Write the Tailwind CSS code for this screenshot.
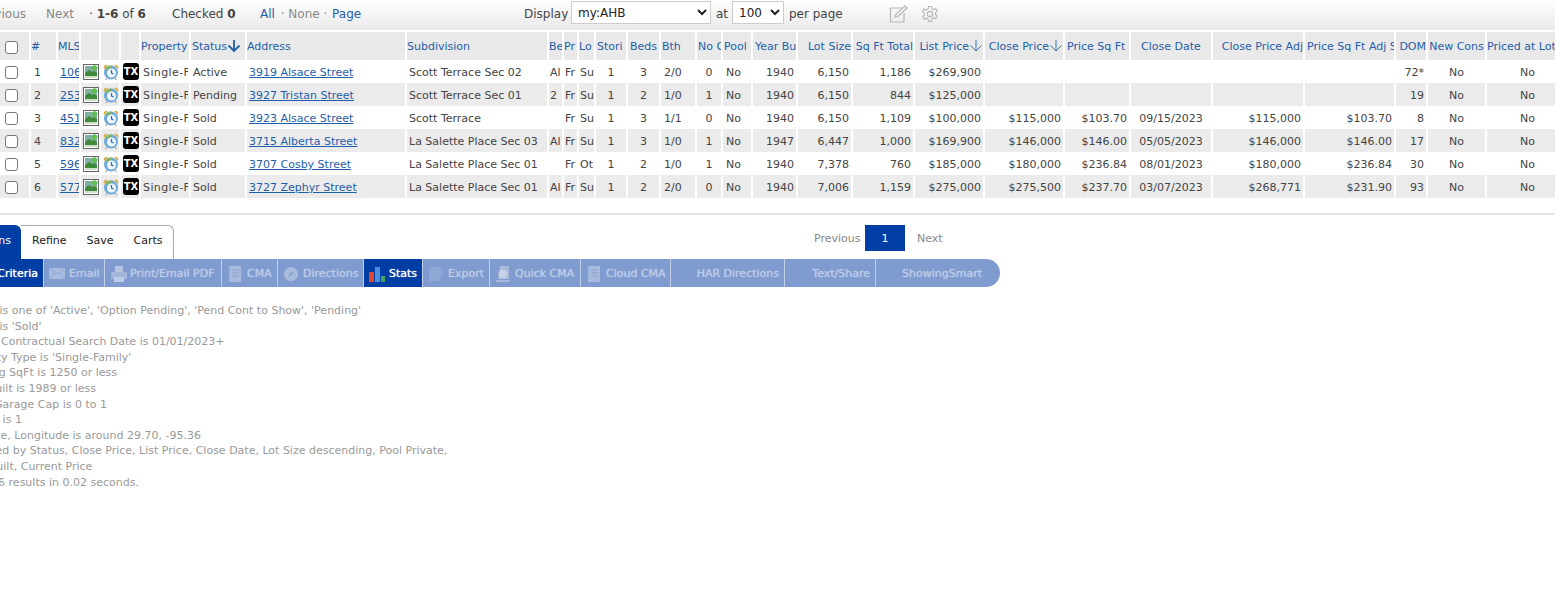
<!DOCTYPE html>
<html lang="en">
<head>
    <meta charset="UTF-8">
    <meta name="viewport" content="width=device-width, initial-scale=1.0">
    <title>Search Results</title>
    <script src="https://cdn.jsdelivr.net/npm/@tailwindcss/browser@4"></script>
</head>
<body class="bg-white overflow-hidden font-['DejaVu_Sans',Verdana,sans-serif] text-[11px] text-[#444]">
    <!-- toolbar, page is scrolled sideways so the left edge is cut -->
    <div class="h-[30px] bg-gradient-to-b from-white to-[#e9e9e9] flex items-center whitespace-nowrap text-[12px] pb-[2px]">
        <div class="flex items-center w-[520px] shrink-0 -ml-[36px]">
            <span class="text-[#888] w-[82px] text-right pr-[20px]">Previous</span>
            <span class="text-[#888] w-[43px]">Next</span>
            <span class="w-[83px]">· <b>1-6</b> of <b>6</b></span>
            <span class="w-[88px]">Checked <b>0</b></span>
            <a class="text-[#1f5ea8]">All</a><span class="text-[#888] ml-[2px] mr-[1px]">&nbsp;· None ·&nbsp;</span><a class="text-[#1f5ea8]">Page</a>
        </div>
        <div class="flex items-center ml-[40px]">
            <span class="w-[42px] mr-[5px]">Display</span>
            <select class="w-[140px] h-[23px] -mt-[3px] bg-white border border-[#ccc] pl-[2px] text-[12px] text-[#222]"><option>my:AHB</option></select>
            <span class="w-[11px] mx-[5px]">at</span>
            <select class="w-[52px] h-[23px] -mt-[3px] bg-white border border-[#ccc] pl-[2px] text-[12px] text-[#222]"><option>100</option></select>
            <span class="w-[54px] ml-[5px]">per page</span>
            <svg class="ml-[45px]" width="20" height="20" viewBox="0 0 20 20" fill="none" stroke="#b5b5b5" stroke-width="1.2"><path d="M14 4H2.500v14H16V9"/><path d="M7 13l1-3L17 2l2 2-8.500 8z"/></svg>
            <svg class="ml-[13px]" width="18" height="18" viewBox="0 0 24 24" fill="none" stroke="#b5b5b5" stroke-width="1.500"><circle cx="12" cy="12" r="3.500"/><path d="M10 2h4l.6 3 2.400 1.200 2.600-1.500 2 3.400-2.300 2 .1 2.800 2.200 2-2 3.400-2.700-1.400-2.300 1.300L14 22h-4l-.6-3.100-2.400-1.300-2.700 1.400-2-3.400 2.300-2v-2.800L2 8.800l2-3.400 2.700 1.400L9.400 5z"/></svg>
        </div>
    </div>

    <table class="table-fixed w-[1570px] border-separate border-spacing-0 mt-0">
        <colgroup id="cols"></colgroup>
        <thead><tr id="head" class="h-[30px]"></tr></thead>
        <tbody id="rows"></tbody>
    </table>

    <hr class="mt-[15px] border-t-2 border-[#e6e6e6]">

    <div class="relative h-[35px] mt-[9px]">
        <div class="absolute left-0 bottom-0 flex items-stretch h-[34px]">
            <span class="bg-[#003da5] text-white rounded-tr-[6px] w-[21px] flex items-center justify-end pr-[10px] pb-[2px] text-[11px]">ns</span>
            <div class="flex items-center gap-[20px] pl-[11px] pr-[10px] pb-[2px] border border-b-0 border-l-0 border-[#aaa] rounded-tr-[6px] text-[#222]">
                <span>Refine</span><span>Save</span><span>Carts</span>
            </div>
        </div>
        <div class="absolute left-[814px] top-[1px] flex items-center h-[26px] text-[#888]">
            <span class="w-[51px] pt-[2px]">Previous</span>
            <span class="w-[40px] h-[26px] pt-[2px] bg-[#003da5] text-white flex items-center justify-center">1</span>
            <span class="ml-[12px] pt-[2px]">Next</span>
        </div>
    </div>

    <!-- action bar -->
    <div class="flex w-[1000px] h-[28px] bg-[#809bcf] rounded-r-[14px] text-[#bccbe8] whitespace-nowrap [text-shadow:0_0_1px_currentColor]" id="bar"></div>

    <div class="mt-[16px] -ml-[39px] text-[#999] leading-[15.6px] whitespace-nowrap">
        <div>Status is one of 'Active', 'Option Pending', 'Pend Cont to Show', 'Pending'</div>
        <div>Status is 'Sold'</div>
        <div class="ml-[15px]">And Contractual Search Date is 01/01/2023+</div>
        <div>Property Type is 'Single-Family'</div>
        <div>Building SqFt is 1250 or less</div>
        <div>Year Built is 1989 or less</div>
        <div class="ml-[8px]">And Garage Cap is 0 to 1</div>
        <div>Stories is 1</div>
        <div class="ml-[1px]">Latitude, Longitude is around 29.70, -95.36</div>
        <div class="ml-[12px]">Sorted by Status, Close Price, List Price, Close Date, Lot Size descending, Pool Private,</div>
        <div class="ml-[1px]">Year Built, Current Price</div>
        <div>Found 6 results in 0.02 seconds.</div>
    </div>

    <script>
        const arrow = '<svg class="inline-block align-[-2px]" width="14" height="13" viewBox="0 0 14 13" fill="none" stroke="#1f5ea8" stroke-width="1.800"><path d="M7 1v11M1.500 6.500L7 12l5.500-5.500"/></svg>';
        const thinArrow = '<svg class="inline-block align-[-2px]" width="14" height="13" viewBox="0 0 14 13" fill="none" stroke="#3b74b4" stroke-width="1"><path d="M7 1v11M1.500 6.500L7 12l5.500-5.500"/></svg>';

        // width, label, header align
        const columns = [
            [31, '<input type="checkbox" class="w-[13px] h-[13px] ml-[5px] appearance-none border border-[#777] rounded-[3px] bg-white block">', 'l'],
            [27, '#', 'l'], [23, 'MLS', 'l'], [20, '', 'l'], [20, '', 'l'], [20, '', 'l'],
            [50, 'Property', 'l'], [56, '<span class="ml-[1px]">Status</span>' + arrow, 'l'], [160, 'Address', 'l'], [142, 'Subdivision', 'l'],
            [15, 'Be', 'l'], [15, 'Pr', 'l'], [17, 'Lo', 'l'], [32, '<span class="ml-[1px]">Stori</span>', 'l'], [33, 'Beds', 'c'], [36, '<span class="ml-[1px]">Bth</span>', 'l'],
            [26, '<span class="ml-[1px]">No G</span>', 'l'], [30, '<span class="ml-[1px]">Pool</span>', 'l'], [45, '<span class="ml-[2px]">Year Bu</span>', 'l'], [55, 'Lot Size', 'r'], [62, 'Sq Ft Total', 'r'],
            [70, 'List Price' + thinArrow, 'r'], [80, 'Close Price' + thinArrow, 'r'], [66, '<span class="ml-[2px]">Price Sq Ft</span>', 'l'],
            [82, 'Close Date', 'c'], [92, 'Close Price Adj', 'r'], [91, '<span class="ml-[2px]">Price Sq Ft Adj Sq</span>', 'l'], [32, 'DOM', 'r'],
            [59, 'New Cons', 'c'], [83, 'Priced at Lot', 'l']
        ];

        const rows = [
            ['1', '106', 'Active', '3919 Alsace Street', 'Scott Terrace Sec 02', 'Al', 'Fr', 'Su', '1', '3', '2/0', '0', 'No', '1940', '6,150', '1,186', '$269,900', '', '', '', '', '', '72*'],
            ['2', '253', 'Pending', '3927 Tristan Street', 'Scott Terrace Sec 01', '2', 'Fr', 'Su', '1', '2', '1/0', '1', 'No', '1940', '6,150', '844', '$125,000', '', '', '', '', '', '19'],
            ['3', '451', 'Sold', '3923 Alsace Street', 'Scott Terrace', '', 'Fr', 'Su', '1', '3', '1/1', '0', 'No', '1940', '6,150', '1,109', '$100,000', '$115,000', '$103.70', '09/15/2023', '$115,000', '$103.70', '8'],
            ['4', '832', 'Sold', '3715 Alberta Street', 'La Salette Place Sec 03', 'Al', 'Fr', 'Su', '1', '3', '1/0', '1', 'No', '1947', '6,447', '1,000', '$169,900', '$146,000', '$146.00', '05/05/2023', '$146,000', '$146.00', '17'],
            ['5', '596', 'Sold', '3707 Cosby Street', 'La Salette Place Sec 01', '', 'Fr', 'Ot', '1', '2', '1/0', '1', 'No', '1940', '7,378', '760', '$185,000', '$180,000', '$236.84', '08/01/2023', '$180,000', '$236.84', '30'],
            ['6', '577', 'Sold', '3727 Zephyr Street', 'La Salette Place Sec 01', 'Al', 'Fr', 'Su', '1', '2', '2/0', '0', 'No', '1940', '7,006', '1,159', '$275,000', '$275,500', '$237.70', '03/07/2023', '$268,771', '$231.90', '93']
        ];

        const photoIcon = '<svg width="16" height="16" viewBox="0 0 16 16" class="ml-[2px]"><rect x=".5" y=".5" width="15" height="15" fill="#fff" stroke="#666"/><rect x="2" y="2" width="12" height="7" fill="#7fb0a0"/><path d="M2 9l4-3 3 2 2-1 3 2v3H2z" fill="#3f8a3a"/><rect x="2" y="12" width="12" height="2" fill="#cfe0c8"/><path d="M11.500 1v6M8.500 4h6" stroke="#5ec04a" stroke-width="1.800"/></svg>';
        const clockIcon = '<svg width="18" height="18" viewBox="0 0 18 18" class="ml-[1px]"><path d="M2 6a3 3 0 0 1 4-4zM16 6a3 3 0 0 0-4-4z" fill="#d9a93f"/><circle cx="9" cy="9.500" r="7" fill="#6fa9d8"/><path d="M3 6a7 7 0 0 1 8-3.200L7 7z" fill="#7fb56a"/><circle cx="9.500" cy="10" r="4.500" fill="#eef6fc"/><path d="M9.500 7v3l2 1" fill="none" stroke="#2a6ea8" stroke-width="1.300"/><path d="M3.500 17l1.500-1.500M14.500 17L13 15.500" stroke="#aaa" stroke-width="1.200"/></svg>';
        const txIcon = '<span class="w-[16px] h-[17px] ml-[2px] bg-black rounded-[3px] text-white font-bold text-[10px] flex items-center justify-center">TX</span>';

        const align = { l: 'text-left', c: 'text-center', r: 'text-right' };

        document.getElementById('cols').innerHTML = columns.map(c => '<col style="width:' + c[0] + 'px">').join('');
        document.getElementById('head').innerHTML = columns.map(c =>
            '<th class="bg-[#e9e9e9] border-r-2 border-t-2 border-white font-normal text-[#1f5ea8] overflow-hidden whitespace-nowrap pt-[2px] ' + align[c[2]] + '">' + c[1] + '</th>'
        ).join('');

        const td = 'border-r-2 border-r-white overflow-hidden whitespace-nowrap ';
        const link = 'text-[#1f5ea8] underline';
        document.getElementById('rows').innerHTML = rows.map((r, i) => {
            const bg = i % 2 ? 'bg-[#ebebeb] ' : 'bg-white ';
            const box = (html, extra) => '<td class="' + td + bg + extra + '">' + html + '</td>';
            const cell = (html, extra) => box(html, 'pt-[4px] ' + extra);
            return '<tr class="h-[23px]">'
                + box('<input type="checkbox" class="w-[13px] h-[13px] ml-[5px] appearance-none border border-[#777] rounded-[3px] bg-white block">', 'pt-[2px]')
                + cell(r[0], 'pl-[3px]')
                + cell('<a class="' + link + '">' + r[1] + '</a>', 'pl-[2px]')
                + box(photoIcon, '') + box(clockIcon, '') + box(txIcon, '')
                + cell('<div class="w-[45px] overflow-hidden tracking-[0.4px]">Single-Family</div>', 'pl-[2px]')
                + cell(r[2], 'pl-[2px]')
                + cell('<a class="' + link + '">' + r[3] + '</a>', 'pl-[2px]')
                + cell(r[4], 'pl-[2px]')
                + cell(r[5], 'pl-[1px]') + cell(r[6], 'pl-[1px]') + cell(r[7], 'pl-[1px]')
                + cell(r[8], 'text-center') + cell(r[9], 'text-center') + cell(r[10], 'pl-[3px]')
                + cell(r[11], 'text-center') + cell(r[12], 'pl-[3px]')
                + cell(r[13], 'text-right pr-[2px]') + cell(r[14], 'text-right pr-[2px]') + cell(r[15], 'text-right pr-[2px]')
                + cell(r[16], 'text-right pr-[2px]') + cell(r[17], 'text-right pr-[2px]') + cell(r[18], 'text-right pr-[2px]')
                + cell(r[19], 'text-center') + cell(r[20], 'text-right pr-[2px]') + cell(r[21], 'text-right pr-[2px]')
                + cell(r[22], 'text-right pr-[2px]') + cell('No', 'text-center') + cell('No', 'text-center')
                + '</tr>';
        }).join('');

        // washed out icons on the disabled buttons
        const svg = inner => '<svg width="18" height="16" viewBox="0 0 18 16" class="mr-[2px] shrink-0">' + inner + '</svg>';
        const icons = {
            email: svg('<rect x="0" y="2" width="16" height="11" fill="#a9bbdd"/><path d="M0 2l8 6 8-6M0 13l6-6M16 13l-6-6" fill="none" stroke="#8fa7d4"/>'),
            print: svg('<rect x="5" y="0" width="8" height="6" fill="#b4c4e2"/><rect x="1" y="6" width="16" height="7" fill="#a2b5da"/><rect x="4" y="11" width="10" height="5" fill="#bccbe8"/>'),
            list: svg('<rect x="2" y="0" width="12" height="16" fill="#a9bbdd"/><path d="M2 1v14" stroke="#8fa7d4" stroke-width="2" stroke-dasharray="1 1"/><path d="M5 4h7M5 7h7M5 10h7" stroke="#8aa3d2"/>'),
            compass: svg('<circle cx="8" cy="8" r="7" fill="#a9bbdd"/><path d="M11 5L9 9 5 11l2-4z" fill="#8aa3d2"/>'),
            stats: svg('<rect x="0" y="6" width="5" height="10" fill="#e0452f"/><rect x="6" y="1" width="5" height="15" fill="#4c8fdc"/><rect x="12" y="10" width="4" height="6" fill="#46a35a"/>'),
            doc: svg('<path d="M1 1h10l5 5-5 9H1z" fill="#8fa8d6"/>'),
            quick: svg('<path d="M5 0h9v13H3z" fill="#a9bbdd"/><circle cx="8" cy="8" r="4.500" fill="#c3d0e8"/><path d="M1 15h14" stroke="#a9bbdd" stroke-width="2"/>')
        };
        // width, label, icon, active, right padding when text sits on the right
        const items = [
            [44, 'Criteria', '', true, 5], [61, 'Email', icons.email], [117, 'Print/Email PDF', icons.print], [56, 'CMA', icons.list],
            [86, 'Directions', icons.compass], [59, 'Stats', icons.stats, true], [67, 'Export', icons.doc], [91, 'Quick CMA', icons.quick],
            [90, 'Cloud CMA', icons.list], [114, 'HAR Directions', '', false, 5], [91, 'Text/Share', '', false, 5], [124, 'ShowingSmart', '', false, 18]
        ];
        document.getElementById('bar').innerHTML = items.map((it, i) => {
            const on = it[3] ? 'bg-[#003da5] text-white ' : '';
            const edge = i < items.length - 1 ? 'border-r border-[#c3d0e8] ' : '';
            const place = it[2] ? 'pl-[5px] ' : 'justify-end ';
            const pad = it[4] ? 'padding-right:' + it[4] + 'px;' : '';
            return '<div class="flex items-center h-full overflow-hidden pt-[2px] ' + place + on + edge + '" style="' + pad + 'width:' + it[0] + 'px">' + it[2] + it[1] + '</div>';
        }).join('');
    </script>
</body>
</html>
